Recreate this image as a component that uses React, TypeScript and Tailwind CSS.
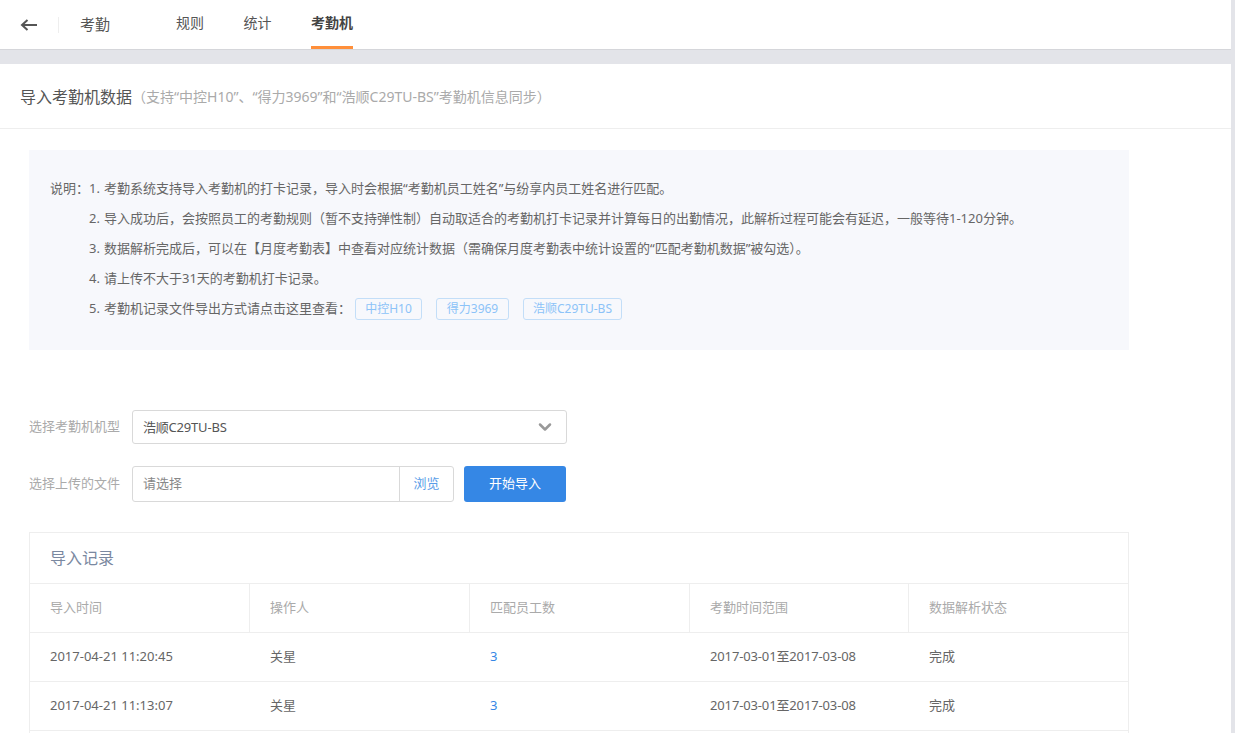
import { ChevronDown } from "lucide-react";

const FONT = "font-['Noto_Sans','Noto_Sans_CJK_SC',sans-serif]";

const TABS = ["规则", "统计", "考勤机"];

const NOTES = [
  "考勤系统支持导入考勤机的打卡记录\uFF0C导入时会根据“考勤机员工姓名”与纷享内员工姓名进行匹配。",
  "导入成功后\uFF0C会按照员工的考勤规则\uFF08暂不支持弹性制\uFF09自动取适合的考勤机打卡记录并计算每日的出勤情况\uFF0C此解析过程可能会有延迟\uFF0C一般等待1-120分钟。",
  "数据解析完成后\uFF0C可以在【月度考勤表】中查看对应统计数据\uFF08需确保月度考勤表中统计设置的“匹配考勤机数据”被勾选\uFF09。",
  "请上传不大于31天的考勤机打卡记录。",
];

const COLUMNS = ["导入时间", "操作人", "匹配员工数", "考勤时间范围", "数据解析状态"];

const ROWS = [
  { time: "2017-04-21 11:20:45", user: "关星", count: 3, range: "2017-03-01至2017-03-08", status: "完成" },
  { time: "2017-04-21 11:13:07", user: "关星", count: 3, range: "2017-03-01至2017-03-08", status: "完成" },
];

const GRID = "grid grid-cols-[220px_220px_220px_219px_1fr]";

function TopNav() {
  return (
    <div className="flex h-[50px] items-center border-b border-[#d5d6da] bg-white shadow-[0_1px_2px_rgba(0,0,0,0.08)]">
      <div className="flex h-[16px] w-[59px] items-center justify-end border-r border-[#eeeeee] pr-[21px]">
        <svg width="17" height="12" viewBox="0 0 17 12" fill="none" stroke="#555555" strokeWidth="2">
          <path d="M2 6h15" />
          <path d="M7.5 1 2 6l5.5 5" />
        </svg>
      </div>
      <span className="ml-[21px] w-[96px] text-[15px] text-[#555555]">考勤</span>
      <div className="flex h-full gap-[39.5px]">
        {TABS.map((tab) => (
          <div
            key={tab}
            className={`flex h-full items-center border-b-[3px] pb-[2px] text-[14px] ${
              tab === "考勤机" ? "border-[#ff8f3a] font-bold text-[#444444]" : "border-transparent text-[#555555]"
            }`}
          >
            {tab}
          </div>
        ))}
      </div>
    </div>
  );
}

function DocTag({ label, className }: { label: string; className: string }) {
  return (
    <span
      className={`flex h-[22px] items-center justify-center rounded-[3px] border border-[#c3def8] text-[12px] text-[#8cc3f8] ${className}`}
    >
      {label}
    </span>
  );
}

function NoteBox() {
  return (
    <div className="ml-[29px] h-[200px] w-[1100px] bg-[#f7f8fc] pt-[24px] pl-[21px] text-[13px] text-[#666666]">
      {NOTES.map((note, i) => (
        <div key={i} className="flex h-[30px] items-center">
          <span className="w-[39px]">{i === 0 ? "说明\uFF1A" : ""}</span>
          <span className="w-[15px]">{i + 1}.</span>
          <span>{note}</span>
        </div>
      ))}
      <div className="flex h-[30px] items-center">
        <span className="w-[39px]" />
        <span className="w-[15px]">5.</span>
        <span className="mr-[4px]">{"考勤机记录文件导出方式请点击这里查看\uFF1A"}</span>
        <div className="flex gap-[14px]">
          <DocTag label="中控H10" className="w-[67px]" />
          <DocTag label="得力3969" className="w-[73px]" />
          <DocTag label="浩顺C29TU-BS" className="w-[99px]" />
        </div>
      </div>
    </div>
  );
}

function ImportForm() {
  return (
    <div className="ml-[29px] mt-[60px] text-[13px]">
      <div className="flex items-center">
        <label className="w-[103px] text-[#aaaaaa]">选择考勤机机型</label>
        <div className="flex h-[34px] w-[435px] items-center justify-between rounded-[3px] border border-[#d9d9d9] pl-[10px] pr-[11px] text-[#555555]">
          <span className="pt-[1px] tracking-[-0.2px]">浩顺C29TU-BS</span>
          <ChevronDown size={20} strokeWidth={3} className="text-[#999999]" />
        </div>
      </div>
      <div className="mt-[22px] flex items-center">
        <label className="w-[103px] text-[#aaaaaa]">选择上传的文件</label>
        <div className="flex h-[36px] w-[322px] items-center rounded-[3px] border border-[#d9d9d9]">
          <span className="flex-1 pl-[10px] text-[#888888]">请选择</span>
          <span className="flex h-full w-[54px] items-center justify-center border-l border-[#d9d9d9] text-[#5a9de8]">
            浏览
          </span>
        </div>
        <button className="ml-[10px] h-[36px] w-[102px] rounded-[3px] bg-[#3587e5] text-white">开始导入</button>
      </div>
    </div>
  );
}

function RecordsTable() {
  return (
    <div className="ml-[29px] mt-[30px] w-[1100px] border border-[#eeeeee]">
      <div className="flex h-[51px] items-center border-b border-[#eeeeee] pl-[20px] text-[16px] text-[#7a88a0]">
        导入记录
      </div>
      <div className={`${GRID} h-[49px] border-b border-[#eeeeee] text-[13px] text-[#aaaaaa]`}>
        {COLUMNS.map((col, i) => (
          <div key={col} className={`flex items-center pl-[20px] ${i < 4 ? "border-r border-[#eeeeee]" : ""}`}>
            {col}
          </div>
        ))}
      </div>
      {ROWS.map((row) => (
        <div key={row.time} className={`${GRID} h-[49px] border-b border-[#eeeeee] text-[13px] text-[#666666]`}>
          <div className="flex items-center pl-[20px]">{row.time}</div>
          <div className="flex items-center pl-[20px]">{row.user}</div>
          <div className="flex items-center pl-[20px] text-[#3587e5]">{row.count}</div>
          <div className="flex items-center pl-[20px] tracking-[-0.14px]">{row.range}</div>
          <div className="flex items-center pl-[20px]">{row.status}</div>
        </div>
      ))}
      <div className="h-[49px]" />
    </div>
  );
}

export default function App() {
  return (
    <div className={`flex h-[733px] w-[1235px] overflow-hidden bg-white ${FONT}`}>
      <div className="w-[1231px]">
        <TopNav />
        <div className="h-[14px] bg-[#e3e4e9]" />
        <div className="flex h-[65px] items-center border-b border-[#eeeeee] pl-[20px] pt-[1px]">
          <span className="text-[16px] text-[#555555]">导入考勤机数据</span>
          <span className="text-[14px] text-[#aaaaaa]">
            {"\uFF08支持“中控H10”、“得力3969”和“浩顺C29TU-BS”考勤机信息同步\uFF09"}
          </span>
        </div>
        <div className="pt-[21px]">
          <NoteBox />
          <ImportForm />
          <RecordsTable />
        </div>
      </div>
      <div className="w-[4px] bg-[#e3e4e9]" />
    </div>
  );
}
